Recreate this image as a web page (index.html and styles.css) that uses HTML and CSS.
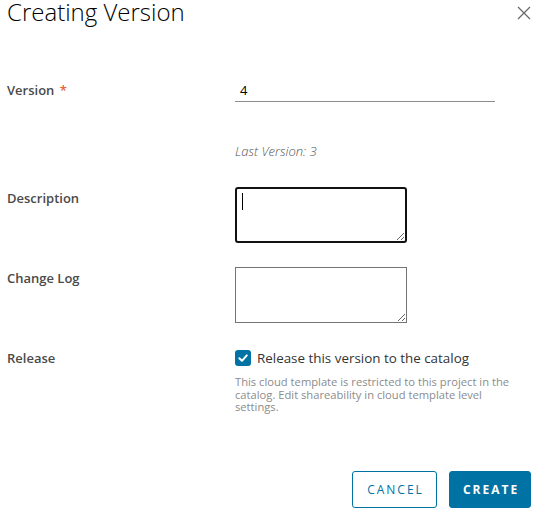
FILE: index.html
```html
<!DOCTYPE html>
<html lang="en">
<head>
<meta charset="utf-8">
<title>Creating Version</title>
<link rel="stylesheet" href="styles.css">
</head>
<body>
<div class="modal">
  <header class="modal-header">
    <h1 class="modal-title">Creating Version</h1>
    <button class="close" type="button" aria-label="Close">
      <svg width="14" height="14" viewBox="0 0 14 14"><path d="M1 1 L13 13 M13 1 L1 13" stroke="#6a6a6a" stroke-width="1.3" fill="none"/></svg>
    </button>
  </header>
  <form class="form">
    <div class="row row-version">
      <label class="label">Version <span class="req">*</span></label>
      <input class="text-input" type="text" value="4">
    </div>
    <div class="row row-hint">
      <span></span>
      <span class="hint">Last Version: 3</span>
    </div>
    <div class="row row-desc">
      <label class="label label-top">Description</label>
      <div class="area-wrap">
        <textarea class="area area-focus"></textarea>
        <span class="caret"></span>
      </div>
    </div>
    <div class="row row-log">
      <label class="label label-top">Change Log</label>
      <textarea class="area"></textarea>
    </div>
    <div class="row row-release">
      <label class="label">Release</label>
      <div class="check-line">
        <span class="checkbox">
          <svg width="12" height="12" viewBox="0 0 12 12"><path d="M2.3 6.2 L5 8.8 L9.8 3.4" stroke="#fff" stroke-width="2" fill="none" stroke-linecap="round" stroke-linejoin="round"/></svg>
        </span>
        <span class="check-text">Release this version to the catalog</span>
      </div>
    </div>
    <div class="row row-help">
      <span></span>
      <p class="help">This cloud template is restricted to this project in the catalog. Edit shareability in cloud template level settings.</p>
    </div>
  </form>
  <footer class="modal-footer">
    <button class="btn btn-outline" type="button">Cancel</button>
    <button class="btn btn-primary" type="button">Create</button>
  </footer>
</div>
</body>
</html>
```
FILE: styles.css
```css
html, body {
  margin: 0;
  padding: 0;
  background: #fff;
}
body {
  font-family: "Open Sans", "Lato", sans-serif;
  color: #454545;
  width: 536px;
  height: 512px;
  overflow: hidden;
}
.modal {
  padding: 0 5px 0 7px;
}
.modal-header {
  display: flex;
  justify-content: space-between;
  align-items: flex-start;
  height: 40px;
}
.modal-title {
  margin: 0;
  font-size: 24px;
  line-height: 24px;
  font-weight: 300;
  color: #000;
}
.close {
  border: 0;
  background: none;
  padding: 0;
  margin: 6px 0 0 0;
  width: 14px;
  height: 14px;
  cursor: pointer;
}
.close svg { display: block; }

.row {
  display: grid;
  grid-template-columns: 228px 260px;
}
.label {
  font-size: 13px;
  font-weight: 600;
  color: #4a4a4a;
  line-height: 24px;
}
.label-top {
  line-height: 16px;
  padding-top: 3px;
}
.req { color: #e0643d; margin-left: 2px; }

.row-version { margin-top: 38px; }
.text-input {
  height: 24px;
  box-sizing: border-box;
  border: 0;
  border-bottom: 1px solid #8c8c8c;
  padding: 0 5px;
  font: 13px "Open Sans", sans-serif;
  color: #000;
  outline: none;
}

.row-hint { margin-top: 41px; }
.hint {
  font-size: 13px;
  line-height: 16px;
  font-style: italic;
  font-weight: 300;
  color: #565656;
}

.row-desc { margin-top: 28px; }
.area-wrap { position: relative; width: 172px; height: 56px; }
.area {
  width: 172px;
  height: 56px;
  box-sizing: border-box;
  border: 1px solid #757575;
  border-radius: 0;
  margin: 0;
  padding: 4px 6px;
  font: 13px "Open Sans", sans-serif;
  display: block;
}
.area-focus {
  border: 2px solid #111;
  border-radius: 3px;
  outline: none;
}
.caret {
  position: absolute;
  left: 7px;
  top: 6px;
  width: 1px;
  height: 17px;
  background: #000;
}
.row-log { margin-top: 24px; }

.row-release { margin-top: 23px; }
.check-line {
  display: flex;
  align-items: center;
  gap: 6px;
  height: 24px;
}
.checkbox {
  width: 16px;
  height: 16px;
  border-radius: 3px;
  background: #0072a3;
  display: flex;
  align-items: center;
  justify-content: center;
}
.check-text {
  font-size: 13.4px;
  color: #333;
}
.row-help {
  margin-top: 6px;
  grid-template-columns: 228px 277px;
}
.help {
  margin: 0;
  font-size: 11.2px;
  line-height: 12.5px;
  color: #8c8c8c;
}

.modal-footer {
  display: flex;
  justify-content: flex-end;
  gap: 12px;
  margin-top: 57px;
}
.btn {
  height: 37px;
  border-radius: 3px;
  font: 600 12px "Open Sans", sans-serif;
  letter-spacing: 2px;
  text-transform: uppercase;
  padding: 0 0 0 2px;
  cursor: pointer;
}
.btn-outline {
  width: 85px;
  background: #fff;
  color: #0072a3;
  border: 1px solid #0072a3;
  font-weight: 500;
}
.btn-primary {
  width: 82px;
  background: #0072a3;
  color: #fff;
  border: 1px solid #0072a3;
  font-weight: 700;
}
```
